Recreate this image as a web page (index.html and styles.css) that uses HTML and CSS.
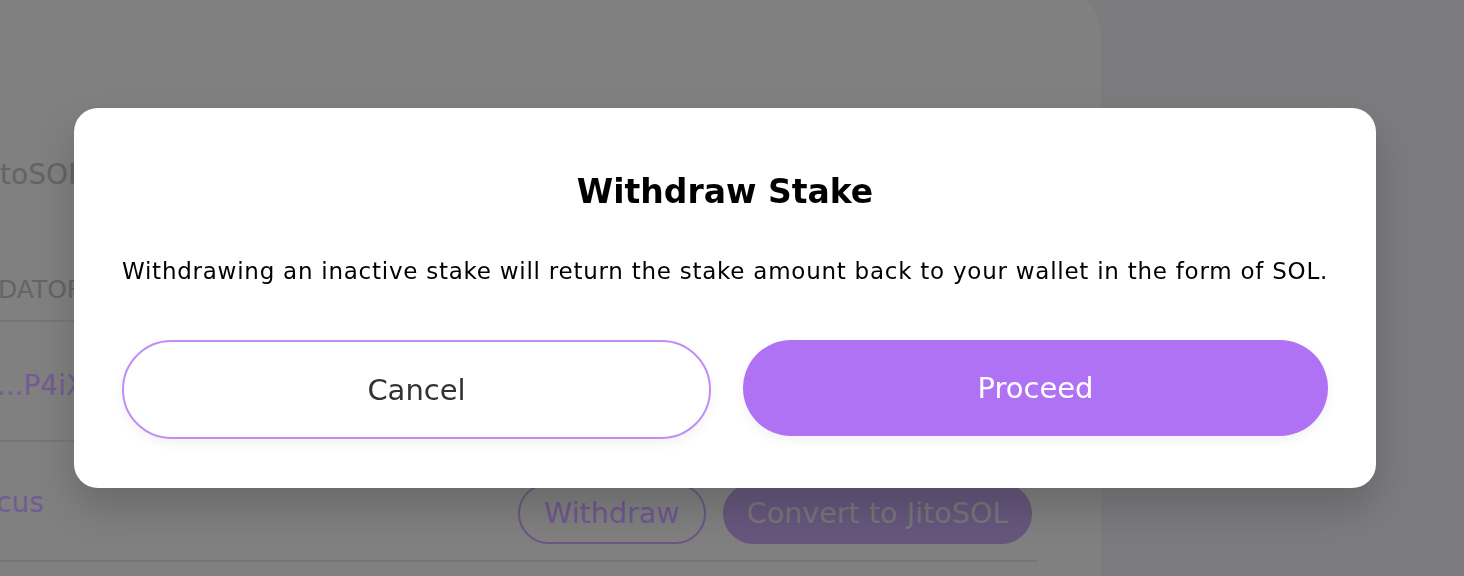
FILE: index.html
```html
<!DOCTYPE html>
<html lang="en">
<head>
<meta charset="utf-8">
<title>Withdraw Stake</title>
<link rel="stylesheet" href="styles.css">
</head>
<body>
  <div class="page">
    <main class="card">
      <h1 class="card-title">JitoSOL</h1>
      <div class="table">
        <div class="row row-head"><span class="col-name">VALIDATOR</span></div>
        <div class="row row-one"><span class="col-name link">7xK...P4iX</span></div>
        <div class="row row-two">
          <span class="col-name link">Marcus</span>
          <div class="row-actions">
            <button class="bg-btn bg-outline">Withdraw</button>
            <button class="bg-btn bg-filled">Convert to JitoSOL</button>
          </div>
        </div>
      </div>
    </main>
    <aside class="side"></aside>
  </div>

  <div class="backdrop">
    <div class="modal" role="dialog" aria-labelledby="modal-title">
      <h2 id="modal-title" class="modal-title">Withdraw Stake</h2>
      <p class="modal-text">Withdrawing an inactive stake will return the stake amount back to your wallet in the form of SOL.</p>
      <div class="modal-actions">
        <button class="btn btn-cancel">Cancel</button>
        <button class="btn btn-proceed">Proceed</button>
      </div>
    </div>
  </div>
</body>
</html>
```

FILE: styles.css
```css
* { box-sizing: border-box; }

html, body {
  margin: 0;
  height: 100%;
  overflow: hidden;
}

body {
  background: #7c7c7e;
  font-family: "DejaVu Sans", "Liberation Sans", sans-serif;
}

.page {
  display: flex;
  align-items: flex-start;
  min-height: 100%;
}

.card {
  flex: 0 0 1197px;
  margin-left: -96px;
  margin-top: -8px;
  min-height: 620px;
  padding: 166px 63px 0 40px;
  background: #7f807f;
  border-radius: 0 40px 0 0;
}

.side {
  flex: 1;
  align-self: stretch;
  background: #7c7c7e;
}

.card-title {
  margin: 0 0 83px 40px;
  font-size: 28px;
  line-height: 34px;
  font-weight: 400;
  color: #636463;
}

.table {
  display: flex;
  flex-direction: column;
}

.row {
  display: flex;
  align-items: center;
  border-bottom: 2px solid #767776;
}

.row-head {
  height: 47px;
  align-items: flex-start;
}

.row-head .col-name {
  font-size: 25px;
  line-height: 30px;
  color: #636463;
}

.row-one,
.row-two {
  height: 120px;
}

.row-one .col-name { padding-top: 10px; }
.row-two .col-name { padding-top: 4px; }

.col-name {
  flex: 0 0 574px;
  font-size: 28px;
  line-height: 34px;
}

.link { color: #735b94; }

.row-actions {
  display: flex;
  gap: 17px;
  margin-top: 24px;
}

.bg-btn {
  height: 61px;
  padding: 0 24px;
  border-radius: 999px;
  font-family: "DejaVu Sans", "Liberation Sans", sans-serif;
  font-size: 28.6px;
}

.bg-outline {
  background: transparent;
  border: 2px solid #6c5785;
  color: #705890;
}

.bg-filled {
  background: #67577d;
  border: 0;
  color: #77777a;
}

.backdrop {
  position: fixed;
  inset: 0;
  display: flex;
  align-items: flex-start;
  justify-content: flex-start;
  padding: 108px 0 0 74px;
}

.modal {
  width: 1302px;
  padding: 64px 48px 49px;
  background: #ffffff;
  border-radius: 24px;
  box-shadow: 0 20px 40px rgba(0, 0, 0, 0.18);
}

.modal-title {
  margin: 0;
  text-align: center;
  font-size: 33px;
  line-height: 40px;
  font-weight: 700;
  color: #000;
}

.modal-text {
  margin: 45px -20px 0;
  text-align: center;
  font-size: 23px;
  line-height: 28px;
  letter-spacing: 0.75px;
  white-space: nowrap;
  color: #000;
}

.modal-actions {
  display: flex;
  align-items: flex-start;
  gap: 32px;
  margin-top: 55px;
}

.btn {
  flex: 1;
  border-radius: 999px;
  font-family: "DejaVu Sans", "Liberation Sans", sans-serif;
  font-size: 29px;
  cursor: pointer;
}

.btn-cancel {
  height: 99px;
  background: #fff;
  border: 2px solid #c18ef7;
  color: #333;
  box-shadow: 0 4px 12px rgba(0, 0, 0, 0.06);
}

.btn-proceed {
  height: 96px;
  background: #b072f4;
  border: 0;
  color: #fff;
  box-shadow: 0 4px 12px rgba(0, 0, 0, 0.06);
}
```
